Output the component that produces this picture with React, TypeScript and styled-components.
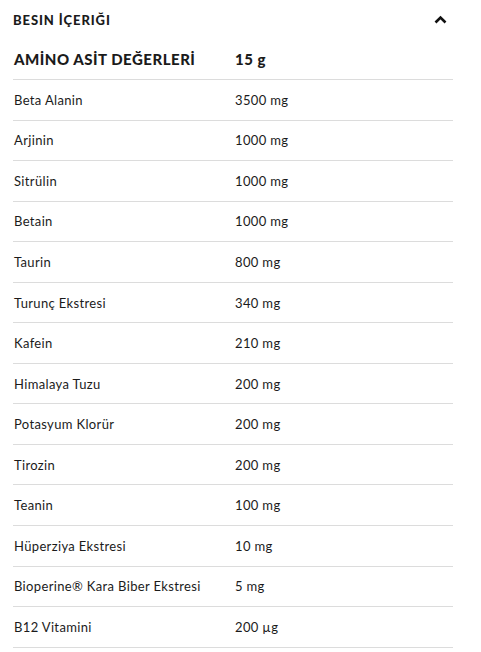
import React from "react";
import styled, { createGlobalStyle } from "styled-components";

const Global = createGlobalStyle`
  html, body { margin: 0; padding: 0; background: #fff; }
  body { font-family: "Lato", "Noto Sans", sans-serif; color: #1b1b1b; }
`;

const Wrapper = styled.section`
  width: 440px;
  padding: 0 13px;
`;

const Header = styled.div`
  height: 39px;
  display: flex;
  align-items: center;
  justify-content: space-between;
  padding-right: 6px;
`;

const Title = styled.h2`
  margin: 0;
  font-size: 13px;
  font-weight: 900;
  letter-spacing: 0.9px;
  text-transform: uppercase;
`;

const Table = styled.div`
  display: flex;
  flex-direction: column;
`;

const Row = styled.div<{ $head?: boolean }>`
  display: grid;
  grid-template-columns: 221px 1fr;
  align-items: center;
  height: ${(p) => (p.$head ? "41px" : "40.55px")};
  box-sizing: border-box;
  border-bottom: 1px solid #dcdcdc;
  padding-left: 1px;
  font-size: ${(p) => (p.$head ? "15px" : "13px")};
  font-weight: ${(p) => (p.$head ? 900 : 400)};
  letter-spacing: ${(p) => (p.$head ? "0.5px" : "0.35px")};
`;

const Cell = styled.span``;

const rows: [string, string][] = [
  ["Beta Alanin", "3500 mg"],
  ["Arjinin", "1000 mg"],
  ["Sitrülin", "1000 mg"],
  ["Betain", "1000 mg"],
  ["Taurin", "800 mg"],
  ["Turunç Ekstresi", "340 mg"],
  ["Kafein", "210 mg"],
  ["Himalaya Tuzu", "200 mg"],
  ["Potasyum Klorür", "200 mg"],
  ["Tirozin", "200 mg"],
  ["Teanin", "100 mg"],
  ["Hüperziya Ekstresi", "10 mg"],
  ["Bioperine® Kara Biber Ekstresi", "5 mg"],
  ["B12 Vitamini", "200 µg"],
];

export default function App() {
  return (
    <>
      <Global />
      <Wrapper>
        <Header>
          <Title>Besin İçeriği</Title>
          <svg width="13" height="9" viewBox="0 0 13 9" fill="none">
            <path d="M1.5 7.5 L6.5 2.5 L11.5 7.5" stroke="#111" strokeWidth="2.6" />
          </svg>
        </Header>
        <Table>
          <Row $head>
            <Cell>AMİNO ASİT DEĞERLERİ</Cell>
            <Cell>15 g</Cell>
          </Row>
          {rows.map(([n, v]) => (
            <Row key={n}>
              <Cell>{n}</Cell>
              <Cell>{v}</Cell>
            </Row>
          ))}
        </Table>
      </Wrapper>
    </>
  );
}
